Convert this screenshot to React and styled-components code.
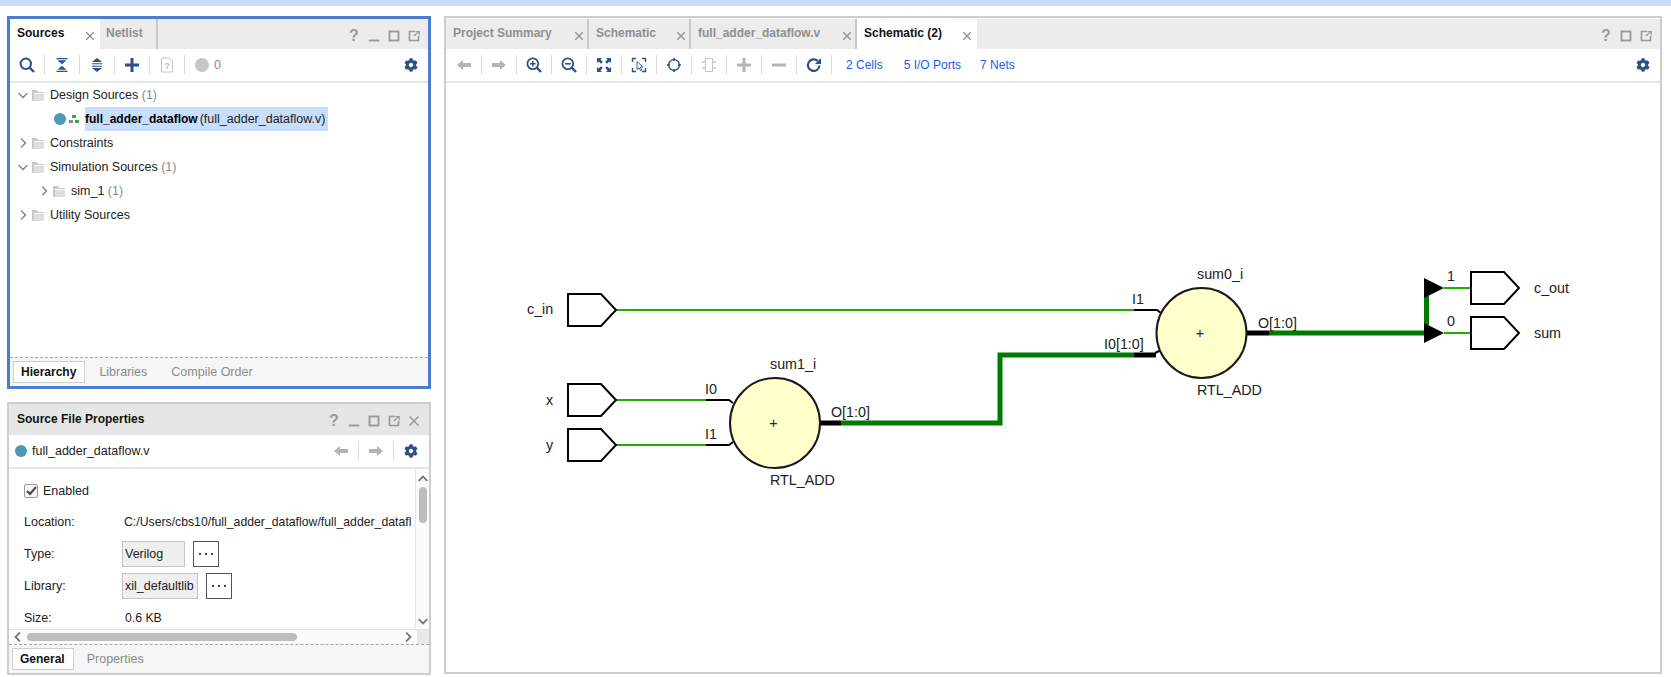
import React from 'react';
import styled, { createGlobalStyle } from 'styled-components';
import { FaCog } from 'react-icons/fa';

const GlobalStyle = createGlobalStyle`
  html, body {
    margin: 0;
    padding: 0;
    background: #fff;
  }

  body {
    font-family: "Liberation Sans", Arial, sans-serif;
    font-size: 12.5px;
    color: #222;
  }
`;

const Page = styled.div`
  width: 1671px;
  height: 677px;
  overflow: hidden;
`;

const TopStrip = styled.div`
  height: 6px;
  background: #c9ddfc;
`;

const Workspace = styled.div`
  display: flex;
  column-gap: 13px;
  padding: 10px 9px 3px 7px;
`;

const LeftColumn = styled.div`
  display: flex;
  flex-direction: column;
  row-gap: 13px;
  width: 424px;
  flex: none;
`;

const Panel = styled.section`
  display: flex;
  flex-direction: column;
  box-sizing: border-box;
  height: ${(p) => p.$height}px;
  padding-top: ${(p) => p.$inset || 0}px;
  border: ${(p) => (p.$active ? '3px solid #4a7dcf' : '2px solid #cdcdcd')};
  background: #fff;
  ${(p) => p.$grow && 'flex: 1;'}
`;

const TabBar = styled.div`
  display: flex;
  align-items: stretch;
  height: 30px;
  flex: none;
  background: #ececec;
`;

const Tab = styled.div`
  display: flex;
  align-items: center;
  justify-content: space-between;
  box-sizing: border-box;
  width: ${(p) => p.$width}px;
  padding: 0 ${(p) => (p.$selected ? 5 : 3)}px 2px ${(p) => p.$left || 7}px;
  background: ${(p) => (p.$selected ? '#fff' : 'transparent')};
  border-right: ${(p) => (p.$selected ? 'none' : '2px solid #c8c8c8')};
  color: ${(p) => (p.$selected ? '#111' : '#8f8f8f')};
  font-size: 12px;
  font-weight: 700;
`;

const TabClose = styled.span`
  display: flex;
  margin-top: 5px;
`;

const WindowButtons = styled.div`
  display: flex;
  align-items: center;
  justify-content: flex-end;
  flex: 1;
  column-gap: 8px;
  margin-top: 3px;
  padding-right: ${(p) => p.$right || 8}px;
`;

const HelpMark = styled.span`
  width: 12px;
  text-align: center;
  color: #9a9a9a;
  font-size: 16px;
  font-weight: 700;
  line-height: 16px;
`;

const Toolbar = styled.div`
  display: flex;
  align-items: center;
  height: 32px;
  flex: none;
  padding-left: ${(p) => p.$left || 0}px;
  border-bottom: 2px solid #e6e6e6;
`;

const ToolSlot = styled.div`
  display: flex;
  align-items: center;
  justify-content: center;
  box-sizing: border-box;
  width: 35px;
  height: 20px;
  flex: none;
  border-right: 1px solid #dcdcdc;
`;

const ToolSpacer = styled.div`
  flex: 1;
`;

const GearSlot = styled.div`
  display: flex;
  padding-right: ${(p) => p.$right || 10}px;
  color: #2f4f8a;
`;

const WarningDot = styled.span`
  width: 14px;
  height: 14px;
  margin: 0 5px 0 10px;
  border-radius: 50%;
  background: #c6c6c6;
`;

const LinkRow = styled.div`
  display: flex;
  column-gap: 19px;
  margin-left: 14px;
  color: #1a5cf0;
  font-size: 12px;
`;

const LinkItem = styled.span`
  padding-right: ${(p) => p.$extra || 0}px;
`;

const Tree = styled.div`
  flex: 1;
`;

const TreeRow = styled.div`
  display: flex;
  align-items: center;
  height: 24px;
  padding-left: ${(p) => p.$indent}px;
`;

const Chevron = styled.span`
  display: flex;
  justify-content: center;
  width: 12px;
  margin-right: 3px;
`;

const FolderSlot = styled.span`
  display: flex;
  margin-right: 6px;
`;

const Muted = styled.span`
  color: #8a8a8a;
`;

const ModuleDot = styled.span`
  width: 12px;
  height: 12px;
  border-radius: 50%;
  background: #4b9ab4;
  flex: none;
`;

const ModuleMark = styled.span`
  display: flex;
  margin: 0 6px 0 3px;
`;

const SelectedName = styled.span`
  display: flex;
  align-items: center;
  column-gap: 2px;
  width: 243px;
  height: 24px;
  background: #c9ddfc;
  white-space: nowrap;

  b {
    color: #000;
    font-size: 12px;
  }
`;

const BottomTabs = styled.div`
  display: flex;
  align-items: center;
  height: 29px;
  flex: none;
  box-sizing: border-box;
  padding: 0 0 1px 3px;
  border-top: 1px dashed #a8a8a8;
  background: #f6f6f6;
`;

const BottomTab = styled.div`
  display: flex;
  align-items: center;
  box-sizing: border-box;
  height: ${(p) => (p.$selected ? '22px' : 'auto')};
  padding: ${(p) => (p.$selected ? '0 8px 0 7px' : '0')};
  margin-right: ${(p) => p.$gap}px;
  border: ${(p) => (p.$selected ? '1px solid #cfcfcf' : 'none')};
  background: ${(p) => (p.$selected ? '#fff' : 'transparent')};
  color: ${(p) => (p.$selected ? '#111' : '#8b8b8b')};
  font-size: ${(p) => (p.$selected ? '12px' : '12.5px')};
  font-weight: ${(p) => (p.$selected ? 700 : 400)};
`;

const TitleBar = styled.div`
  display: flex;
  align-items: center;
  height: 31px;
  flex: none;
  padding-left: 8px;
  background: #e6e6e6;
`;

const TitleText = styled.span`
  margin-bottom: 2px;
  color: #111;
  font-size: 12px;
  font-weight: 700;
`;

const FileLabel = styled.div`
  display: flex;
  align-items: center;
  column-gap: 5px;
  box-sizing: border-box;
  width: 315px;
  padding-left: 6px;
  flex: none;
`;

const PropsBody = styled.div`
  display: flex;
  flex: 1;
  min-height: 0;
`;

const PropsContent = styled.div`
  flex: 1;
  min-width: 0;
  overflow: hidden;
  padding: 14px 0 0 15px;
`;

const EnabledRow = styled.label`
  display: flex;
  align-items: center;
  column-gap: 5px;
  height: 16px;
  margin-bottom: 15px;
`;

const CheckBox = styled.span`
  display: flex;
  align-items: center;
  justify-content: center;
  box-sizing: border-box;
  width: 14px;
  height: 14px;
  border: 1px solid #9b9b9b;
  border-radius: 2px;
  background: #f4f4f4;
`;

const PropRow = styled.div`
  display: grid;
  grid-template-columns: 98px 1fr;
  align-items: center;
  height: ${(p) => p.$height}px;
  margin-bottom: ${(p) => p.$gap || 0}px;
  white-space: nowrap;
`;

const PropValue = styled.div`
  padding-left: ${(p) => p.$left || 0}px;
  font-size: 12.25px;
`;

const FieldGroup = styled.div`
  display: flex;
  column-gap: 8px;
`;

const ReadonlyField = styled.div`
  display: flex;
  align-items: center;
  box-sizing: border-box;
  width: ${(p) => p.$width}px;
  height: 26px;
  padding-left: 2px;
  border: 1px solid #c4c4c4;
  background: #efefef;
`;

const DotsButton = styled.div`
  display: flex;
  align-items: center;
  justify-content: center;
  column-gap: 4px;
  box-sizing: border-box;
  width: 26px;
  height: 26px;
  border: 1px solid #555;
  background: #fff;
`;

const Dot = styled.span`
  width: 2px;
  height: 2px;
  background: #444;
`;

const VScroll = styled.div`
  display: flex;
  flex-direction: column;
  align-items: center;
  justify-content: space-between;
  box-sizing: border-box;
  width: 14px;
  flex: none;
  padding: 5px 0 3px;
  border-left: 1px solid #e4e4e4;
  background: #fbfbfb;
`;

const VThumbTrack = styled.div`
  flex: 1;
  padding-top: 3px;
`;

const VThumb = styled.div`
  width: 8px;
  height: 36px;
  border-radius: 4px;
  background: #bdbdbd;
`;

const HScroll = styled.div`
  display: flex;
  align-items: center;
  height: 14px;
  flex: none;
  border-top: 1px solid #e4e4e4;
  background: #fbfbfb;
`;

const HArrow = styled.span`
  display: flex;
  justify-content: center;
  width: 18px;
  flex: none;
`;

const HThumb = styled.div`
  width: 270px;
  height: 8px;
  border-radius: 4px;
  background: #bdbdbd;
`;

const HTrack = styled.div`
  flex: 1;
`;

const ScrollCorner = styled.div`
  width: 12px;
  height: 14px;
  flex: none;
  background: #e8e8e8;
`;

const Canvas = styled.svg`
  display: block;
  flex: 1;
  min-height: 0;
  width: 100%;

  text {
    font-family: "Liberation Sans", Arial, sans-serif;
    font-size: 14.3px;
    fill: #222;
  }
`;

const NAVY = '#2f4f8a';
const GRAY = '#b4b4b4';
const SCROLL = '#777';
const WIRE = '#1fb000';
const BUS = '#007a00';

const Svg = ({ size = 16, children }) => (
  <svg width={size} height={size} viewBox="0 0 16 16" fill="none">{children}</svg>
);

const CloseIcon = ({ color = '#8e8e8e', size = 10 }) => (
  <Svg size={size}>
    <path d="M2 2l12 12M14 2L2 14" stroke={color} strokeWidth="2" />
  </Svg>
);

const MinIcon = () => (
  <Svg size={12}>
    <path d="M1 14h14" stroke="#999" strokeWidth="2.5" />
  </Svg>
);

const MaxIcon = () => (
  <Svg size={12}>
    <rect x="2" y="2" width="12" height="12" stroke="#999" strokeWidth="2.5" />
  </Svg>
);

const PopIcon = () => (
  <Svg size={12}>
    <path d="M9 2H2v12h12V8" stroke="#999" strokeWidth="2.2" />
    <path d="M8 8l6-6M10 2h5v5" stroke="#999" strokeWidth="1.6" />
  </Svg>
);

const WindowIcons = ({ right, min = true, close = false }) => (
  <WindowButtons $right={right}>
    <HelpMark>?</HelpMark>
    {min && <MinIcon />}
    <MaxIcon />
    <PopIcon />
    {close && <CloseIcon color="#999" size={12} />}
  </WindowButtons>
);

const SearchIcon = () => (
  <Svg>
    <circle cx="6.8" cy="6.8" r="5.2" stroke={NAVY} strokeWidth="2" />
    <path d="M10.5 10.5l4.5 4.5" stroke={NAVY} strokeWidth="2.4" />
  </Svg>
);

const CollapseIcon = () => (
  <Svg>
    <path d="M2.5 1h11v1.3h-11zM2.5 13.7h11V15h-11z" fill={NAVY} />
    <path d="M3.5 3.2h9L8 7.3zM3.5 12.8h9L8 8.7z" fill={NAVY} />
  </Svg>
);

const ExpandIcon = () => (
  <Svg>
    <path d="M8 1l5 4H3zM8 15l5-4H3z" fill={NAVY} />
    <path d="M3 6.2h10v1H3zM3 8.8h10v1H3z" fill={NAVY} />
  </Svg>
);

const PlusIcon = ({ color = NAVY }) => (
  <Svg>
    <path d="M1 8h14M8 1v14" stroke={color} strokeWidth="3" />
  </Svg>
);

const MinusIcon = () => (
  <Svg>
    <path d="M1 8h14" stroke={GRAY} strokeWidth="3" />
  </Svg>
);

const HelpFileIcon = () => (
  <Svg>
    <path d="M2.5 1h8l3 3v11h-11z" fill="#fff" stroke="#c4c4c4" />
    <text x="8" y="12" textAnchor="middle" fontSize="9" fontWeight="700" fill="#bdbdbd" fontFamily="Liberation Sans">?</text>
  </Svg>
);

const ArrowLeft = () => (
  <Svg>
    <path d="M1 8l6-5v3h8v4H7v3z" fill={GRAY} />
  </Svg>
);

const ArrowRight = () => (
  <Svg>
    <path d="M15 8L9 3v3H1v4h8v3z" fill={GRAY} />
  </Svg>
);

const ZoomInIcon = () => (
  <Svg>
    <circle cx="6.8" cy="6.8" r="5.4" stroke={NAVY} strokeWidth="1.8" />
    <path d="M10.7 10.7l4.3 4.3" stroke={NAVY} strokeWidth="2.4" />
    <path d="M4 6.8h5.6M6.8 4v5.6" stroke={NAVY} strokeWidth="1.4" />
  </Svg>
);

const ZoomOutIcon = () => (
  <Svg>
    <circle cx="6.8" cy="6.8" r="5.4" stroke={NAVY} strokeWidth="1.8" />
    <path d="M10.7 10.7l4.3 4.3" stroke={NAVY} strokeWidth="2.4" />
    <path d="M4 6.8h5.6" stroke={NAVY} strokeWidth="1.6" />
  </Svg>
);

const FitIcon = () => (
  <Svg>
    <path d="M1 1h5L4.4 2.6l2.4 2.4-1.8 1.8-2.4-2.4L1 6zM15 1v5l-1.6-1.6-2.4 2.4L9.2 5l2.4-2.4L10 1zM1 15v-5l1.6 1.6L5 9.2 6.8 11l-2.4 2.4L6 15zM15 15h-5l1.6-1.6L9.2 11l1.8-1.8 2.4 2.4L15 10z" fill={NAVY} />
  </Svg>
);

const SelectAreaIcon = () => (
  <Svg>
    <path d="M1.5 5V1.5H5M11 1.5h3.5V5M1.5 11v3.5H5M11 14.5h3.5V11" stroke={NAVY} strokeWidth="1.4" />
    <path d="M6 4.5l6 5.5-2.7.2 1.5 3-1.2.6-1.5-3L6 12.5z" fill="#fff" stroke={NAVY} strokeWidth="0.9" />
  </Svg>
);

const TargetIcon = () => (
  <Svg>
    <circle cx="8" cy="8" r="5.4" stroke={NAVY} strokeWidth="1.4" />
    <path d="M8 1v3M8 12v3M1 8h3M12 8h3" stroke={NAVY} strokeWidth="1.6" />
  </Svg>
);

const ComponentIcon = () => (
  <Svg>
    <rect x="4.5" y="1.5" width="7" height="13" stroke="#c6c6c6" />
    <path d="M1 5h3.5M1 11h3.5M11.5 5H15M11.5 11H15" stroke="#c6c6c6" strokeWidth="1.6" />
  </Svg>
);

const RefreshIcon = () => (
  <Svg>
    <path d="M13.5 8.5a5.800 5.800 0 1 1-1.800-4.600" stroke={NAVY} strokeWidth="2.2" />
    <path d="M15 1v6h-6z" fill={NAVY} />
  </Svg>
);

const ChevronDown = ({ color = '#777', weight = 2 }) => (
  <Svg size={10}>
    <path d="M1 5l7 7 7-7" stroke={color} strokeWidth={weight} />
  </Svg>
);

const ChevronRight = ({ color = '#777', weight = 2 }) => (
  <Svg size={10}>
    <path d="M5 1l7 7-7 7" stroke={color} strokeWidth={weight} />
  </Svg>
);

const ChevronUp = ({ color = '#777', weight = 2 }) => (
  <Svg size={10}>
    <path d="M1 11l7-7 7 7" stroke={color} strokeWidth={weight} />
  </Svg>
);

const ChevronLeft = ({ color = '#777', weight = 2 }) => (
  <Svg size={10}>
    <path d="M11 1L4 8l7 7" stroke={color} strokeWidth={weight} />
  </Svg>
);

const FolderIcon = () => (
  <svg width="12" height="11" viewBox="0 0 12 11">
    <path d="M0 0h5l1 2h6v1H2v8H0z" fill="#c9c9c9" />
    <path d="M2 4h10v7H2z" fill="#dedede" />
  </svg>
);

const HierarchyMark = () => (
  <svg width="10" height="8" viewBox="0 0 10 8">
    <rect x="3" y="0" width="4" height="3" fill="#3aa655" />
    <rect x="0" y="5" width="4" height="3" fill="#8a8a8a" />
    <rect x="6" y="5" width="4" height="3" fill="#3aa655" />
  </svg>
);

const CheckMark = () => (
  <svg width="11" height="10" viewBox="0 0 11 10">
    <path d="M1 5l3 3 6-7" fill="none" stroke="#444" strokeWidth="2" />
  </svg>
);

const Gear = ({ right }) => (
  <GearSlot $right={right}>
    <FaCog size={14} />
  </GearSlot>
);

const Dots = () => (
  <DotsButton>
    <Dot />
    <Dot />
    <Dot />
  </DotsButton>
);

const Port = ({ x, y }) => (
  <polygon
    points={`${x},${y - 16} ${x + 33},${y - 16} ${x + 48},${y} ${x + 33},${y + 16} ${x},${y + 16}`}
    fill="#fff"
    stroke="#000"
    strokeWidth="2"
  />
);

const Adder = ({ cx, cy }) => (
  <>
    <circle cx={cx} cy={cy} r="45" fill="#ffffcc" stroke="#1a1a1a" strokeWidth="2" />
    <text x={cx - 1.5} y={cy + 5} textAnchor="middle">+</text>
  </>
);

function Schematic() {
  return (
    <Canvas viewBox="446 83 1214 589" preserveAspectRatio="xMinYMin meet">
      <path d="M616 310H1134" stroke={WIRE} strokeWidth="2" fill="none" />
      <path d="M1134 310H1157L1161 313" stroke="#000" strokeWidth="2" fill="none" />
      <path d="M616 400H706" stroke={WIRE} strokeWidth="2" fill="none" />
      <path d="M706 400H729L733 403" stroke="#000" strokeWidth="2" fill="none" />
      <path d="M616 445H706" stroke={WIRE} strokeWidth="2" fill="none" />
      <path d="M706 445H729L733 442" stroke="#000" strokeWidth="2" fill="none" />
      <path d="M841 423H1000V355H1134" stroke={BUS} strokeWidth="5" fill="none" />
      <path d="M820 423H841" stroke="#000" strokeWidth="5" fill="none" />
      <path d="M1134 355H1156" stroke="#000" strokeWidth="5" fill="none" />
      <path d="M1155 353L1161 350" stroke="#000" strokeWidth="2" fill="none" />
      <path d="M1247 333H1269" stroke="#000" strokeWidth="5" fill="none" />
      <path d="M1269 333H1425" stroke={BUS} strokeWidth="5" fill="none" />
      <path d="M1426.5 296V325" stroke={BUS} strokeWidth="5" fill="none" />
      <path d="M1444 288H1471M1444 333H1471" stroke={WIRE} strokeWidth="2" fill="none" />
      <polygon points="1424,278 1444,288 1424,298" fill="#000" />
      <polygon points="1424,323 1444,333 1424,343" fill="#000" />

      <Port x={568} y={310} />
      <Port x={568} y={400} />
      <Port x={568} y={445} />
      <Port x={1471} y={288} />
      <Port x={1471} y={333} />
      <Adder cx={775} cy={423} />
      <Adder cx={1201.5} cy={333} />

      <text x="527" y="314">c_in</text>
      <text x="546" y="405">x</text>
      <text x="546" y="450">y</text>
      <text x="705" y="394">I0</text>
      <text x="705" y="439">I1</text>
      <text x="770" y="369">sum1_i</text>
      <text x="770" y="485">RTL_ADD</text>
      <text x="831" y="417">O[1:0]</text>
      <text x="1132" y="304">I1</text>
      <text x="1104" y="349">I0[1:0]</text>
      <text x="1197" y="279">sum0_i</text>
      <text x="1197" y="395">RTL_ADD</text>
      <text x="1258" y="328">O[1:0]</text>
      <text x="1447" y="281">1</text>
      <text x="1447" y="326">0</text>
      <text x="1534" y="293">c_out</text>
      <text x="1534" y="338">sum</text>
    </Canvas>
  );
}

function SourcesPanel() {
  return (
    <Panel $active $height={373}>
      <TabBar>
        <Tab $selected $width={90}>
          Sources
          <TabClose><CloseIcon /></TabClose>
        </Tab>
        <Tab $width={58} $left={6}>Netlist</Tab>
        <WindowIcons />
      </TabBar>
      <Toolbar>
        <ToolSlot><SearchIcon /></ToolSlot>
        <ToolSlot><CollapseIcon /></ToolSlot>
        <ToolSlot><ExpandIcon /></ToolSlot>
        <ToolSlot><PlusIcon /></ToolSlot>
        <ToolSlot><HelpFileIcon /></ToolSlot>
        <WarningDot />
        <Muted>0</Muted>
        <ToolSpacer />
        <Gear />
      </Toolbar>
      <Tree>
        <TreeRow $indent={7}>
          <Chevron><ChevronDown /></Chevron>
          <FolderSlot><FolderIcon /></FolderSlot>
          Design Sources&nbsp;<Muted>(1)</Muted>
        </TreeRow>
        <TreeRow $indent={44}>
          <ModuleDot />
          <ModuleMark><HierarchyMark /></ModuleMark>
          <SelectedName><b>full_adder_dataflow</b> (full_adder_dataflow.v)</SelectedName>
        </TreeRow>
        <TreeRow $indent={7}>
          <Chevron><ChevronRight /></Chevron>
          <FolderSlot><FolderIcon /></FolderSlot>
          Constraints
        </TreeRow>
        <TreeRow $indent={7}>
          <Chevron><ChevronDown /></Chevron>
          <FolderSlot><FolderIcon /></FolderSlot>
          Simulation Sources&nbsp;<Muted>(1)</Muted>
        </TreeRow>
        <TreeRow $indent={28}>
          <Chevron><ChevronRight /></Chevron>
          <FolderSlot><FolderIcon /></FolderSlot>
          sim_1&nbsp;<Muted>(1)</Muted>
        </TreeRow>
        <TreeRow $indent={7}>
          <Chevron><ChevronRight /></Chevron>
          <FolderSlot><FolderIcon /></FolderSlot>
          Utility Sources
        </TreeRow>
      </Tree>
      <BottomTabs>
        <BottomTab $selected $gap={14}>Hierarchy</BottomTab>
        <BottomTab $gap={24}>Libraries</BottomTab>
        <BottomTab $gap={0}>Compile Order</BottomTab>
      </BottomTabs>
    </Panel>
  );
}

function PropertiesPanel() {
  return (
    <Panel $height={273}>
      <TitleBar>
        <TitleText>Source File Properties</TitleText>
        <WindowIcons close right={9} />
      </TitleBar>
      <Toolbar>
        <FileLabel>
          <ModuleDot />
          full_adder_dataflow.v
        </FileLabel>
        <ToolSlot><ArrowLeft /></ToolSlot>
        <ToolSlot><ArrowRight /></ToolSlot>
        <ToolSpacer />
        <Gear right={11} />
      </Toolbar>
      <PropsBody>
        <PropsContent>
          <EnabledRow>
            <CheckBox><CheckMark /></CheckBox>
            Enabled
          </EnabledRow>
          <PropRow $height={16} $gap={11}>
            Location:
            <PropValue $left={2}>C:/Users/cbs10/full_adder_dataflow/full_adder_datafl</PropValue>
          </PropRow>
          <PropRow $height={26} $gap={6}>
            Type:
            <FieldGroup>
              <ReadonlyField $width={63}>Verilog</ReadonlyField>
              <Dots />
            </FieldGroup>
          </PropRow>
          <PropRow $height={26} $gap={11}>
            Library:
            <FieldGroup>
              <ReadonlyField $width={76}>xil_defaultlib</ReadonlyField>
              <Dots />
            </FieldGroup>
          </PropRow>
          <PropRow $height={16}>
            Size:
            <PropValue $left={3}>0.6 KB</PropValue>
          </PropRow>
        </PropsContent>
        <VScroll>
          <ChevronUp color={SCROLL} weight={3} />
          <VThumbTrack><VThumb /></VThumbTrack>
          <ChevronDown color={SCROLL} weight={3} />
        </VScroll>
      </PropsBody>
      <HScroll>
        <HArrow><ChevronLeft color={SCROLL} weight={3} /></HArrow>
        <HThumb />
        <HTrack />
        <HArrow><ChevronRight color={SCROLL} weight={3} /></HArrow>
        <ScrollCorner />
      </HScroll>
      <BottomTabs>
        <BottomTab $selected $gap={13}>General</BottomTab>
        <BottomTab $gap={0}>Properties</BottomTab>
      </BottomTabs>
    </Panel>
  );
}

function SchematicPanel() {
  return (
    <Panel $grow $height={658} $inset={1}>
      <TabBar>
        <Tab $width={143}>
          Project Summary
          <TabClose><CloseIcon /></TabClose>
        </Tab>
        <Tab $width={102}>
          Schematic
          <TabClose><CloseIcon /></TabClose>
        </Tab>
        <Tab $width={166}>
          full_adder_dataflow.v
          <TabClose><CloseIcon /></TabClose>
        </Tab>
        <Tab $selected $width={120}>
          Schematic (2)
          <TabClose><CloseIcon /></TabClose>
        </Tab>
        <WindowIcons min={false} />
      </TabBar>
      <Toolbar $left={1}>
        <ToolSlot><ArrowLeft /></ToolSlot>
        <ToolSlot><ArrowRight /></ToolSlot>
        <ToolSlot><ZoomInIcon /></ToolSlot>
        <ToolSlot><ZoomOutIcon /></ToolSlot>
        <ToolSlot><FitIcon /></ToolSlot>
        <ToolSlot><SelectAreaIcon /></ToolSlot>
        <ToolSlot><TargetIcon /></ToolSlot>
        <ToolSlot><ComponentIcon /></ToolSlot>
        <ToolSlot><PlusIcon color={GRAY} /></ToolSlot>
        <ToolSlot><MinusIcon /></ToolSlot>
        <ToolSlot><RefreshIcon /></ToolSlot>
        <LinkRow>
          <LinkItem $extra={2}>2 Cells</LinkItem>
          <LinkItem>5 I/O Ports</LinkItem>
          <LinkItem>7 Nets</LinkItem>
        </LinkRow>
        <ToolSpacer />
        <Gear />
      </Toolbar>
      <Schematic />
    </Panel>
  );
}

export default function App() {
  return (
    <Page>
      <GlobalStyle />
      <TopStrip />
      <Workspace>
        <LeftColumn>
          <SourcesPanel />
          <PropertiesPanel />
        </LeftColumn>
        <SchematicPanel />
      </Workspace>
    </Page>
  );
}
